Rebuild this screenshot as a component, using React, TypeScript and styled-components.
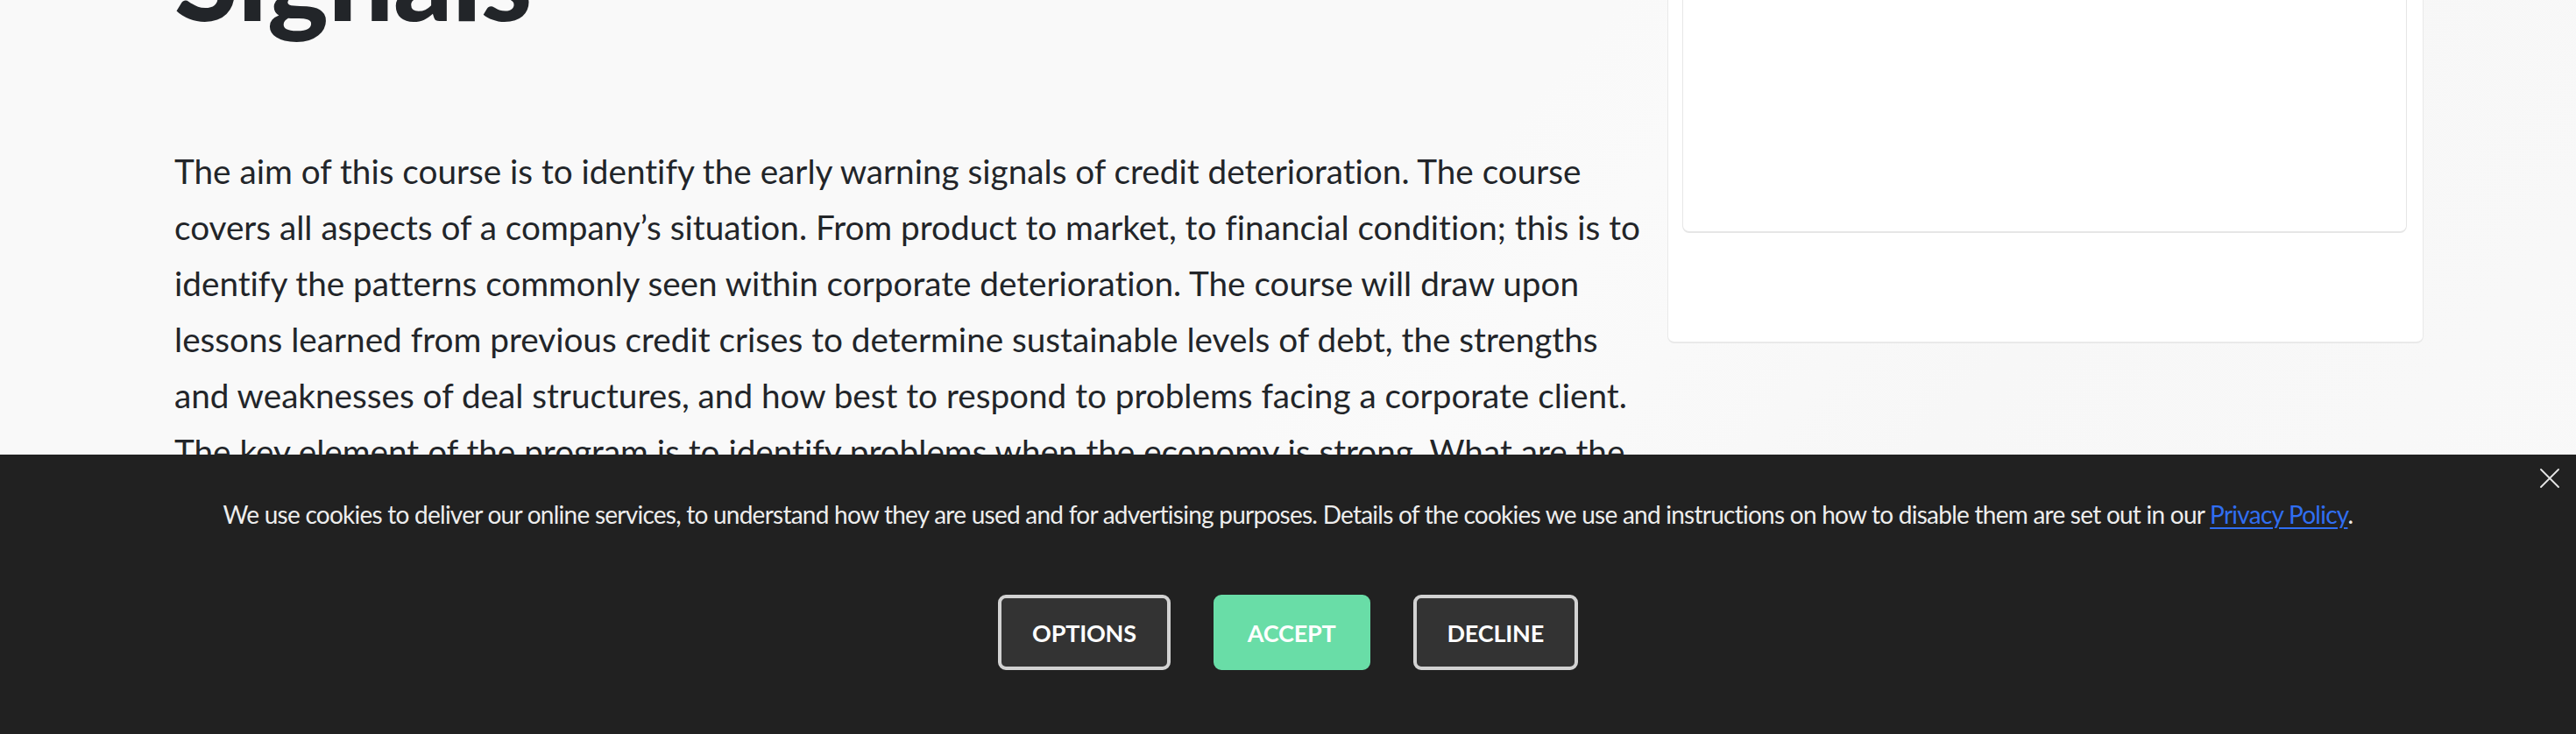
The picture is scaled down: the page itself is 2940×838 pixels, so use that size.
import React from "react";
import styled, { createGlobalStyle } from "styled-components";

const GlobalStyle = createGlobalStyle`
  html, body {
    margin: 0;
    padding: 0;
    height: 838px;
    overflow: hidden;
    background: #f9f9f9;
  }
  body {
    font-family: Lato, "Open Sans", Arial, sans-serif;
    color: #222529;
  }
  * { box-sizing: border-box; }
`;

const Page = styled.div`
  height: 838px;
  overflow: hidden;
  background: linear-gradient(132deg, #f9f9f9 0%, #f9f9f9 50%, #fafafa 56%, #f7f7f7 72%, #f9f9f9 100%);
`;

const Layout = styled.div`
  display: grid;
  grid-template-columns: 1680px 863px;
  column-gap: 24px;
  align-items: start;
  padding-left: 199px;
  margin-top: -106px;
`;

const Article = styled.article`
  display: flex;
  flex-direction: column;
`;

const Title = styled.h1`
  margin: 0;
  font-family: Lato, sans-serif;
  font-weight: 900;
  font-size: 132px;
  line-height: 1.2;
  color: #222529;
  letter-spacing: -0.5px;
`;

const Body = styled.p`
  margin: 111px 0 0;
  font-family: Lato, sans-serif;
  font-size: 38.7px;
  line-height: 64px;
  letter-spacing: 0;
  color: #222529;
  font-variant-ligatures: none;
`;

const Card = styled.aside`
  background: #ffffff;
  border: 1px solid #e9e9e9;
  border-bottom-width: 2px;
  border-radius: 8px;
  padding: 16px 18px 124px 16px;
`;

const Frame = styled.div`
  height: 355px;
  background: #ffffff;
  border: 1px solid #e6e6e6;
  border-bottom-width: 2px;
  border-radius: 8px;
`;

const Banner = styled.div`
  position: fixed;
  left: 0;
  right: 0;
  bottom: 0;
  height: 319px;
  background: #212121;
  display: flex;
  flex-direction: column;
  align-items: center;
  padding-top: 48px;
`;

const Notice = styled.p`
  margin: 0;
  font-family: Lato, sans-serif;
  font-size: 28px;
  line-height: 40px;
  letter-spacing: -0.75px;
  color: #ededed;
  text-align: center;
`;

const PolicyLink = styled.a`
  color: #306ef2;
  text-decoration: underline;
  text-underline-offset: 4px;
  text-decoration-thickness: 2px;
`;

const Actions = styled.div`
  display: flex;
  gap: 49px;
  margin-top: 72px;
`;

const ActionButton = styled.button<{ $primary?: boolean }>`
  height: 86px;
  padding: 0 35px;
  border-radius: 9px;
  border: 4px solid ${(p) => (p.$primary ? "#69dda7" : "#d2d2d2")};
  background: ${(p) => (p.$primary ? "#69dda7" : "#333333")};
  color: #ffffff;
  font-family: Lato, sans-serif;
  font-weight: 700;
  font-size: 27px;
  text-transform: uppercase;
  letter-spacing: -0.2px;
  cursor: pointer;
`;

const Close = styled.button`
  position: absolute;
  top: 15px;
  right: 18px;
  width: 24px;
  height: 24px;
  padding: 0;
  border: 0;
  background: transparent;
  display: flex;
  align-items: center;
  justify-content: center;
  cursor: pointer;
`;

export default function App() {
  return (
    <Page>
      <GlobalStyle />
      <Layout>
        <Article>
          <Title>Signals</Title>
          <Body>
            The aim of this course is to identify the early warning signals of credit deterioration. The course
            covers all aspects of a company’s situation. From product to market, to financial condition; this is to
            identify the patterns commonly seen within corporate deterioration. The course will draw upon lessons
            learned from previous credit crises to determine sustainable levels of debt, the strengths and
            weaknesses of deal structures, and how best to respond to problems facing a corporate client. The key
            element of the program is to identify problems when the economy is strong. What are the signs that a
            company is heading for trouble, and how can a lender act early enough to protect its position?
          </Body>
        </Article>
        <Card>
          <Frame />
        </Card>
      </Layout>
      <Banner>
        <Close aria-label="Close">
          <svg width="22" height="22" viewBox="0 0 22 22" fill="none">
            <path d="M1 1L21 21M21 1L1 21" stroke="#e6e6e6" strokeWidth="1.8" strokeLinecap="round" />
          </svg>
        </Close>
        <Notice>
          We use cookies to deliver our online services, to understand how they are used and for advertising
          purposes. Details of the cookies we use and instructions on how to disable them are set out in our{" "}
          <PolicyLink href="#">Privacy Policy</PolicyLink>.
        </Notice>
        <Actions>
          <ActionButton>Options</ActionButton>
          <ActionButton $primary>Accept</ActionButton>
          <ActionButton>Decline</ActionButton>
        </Actions>
      </Banner>
    </Page>
  );
}
